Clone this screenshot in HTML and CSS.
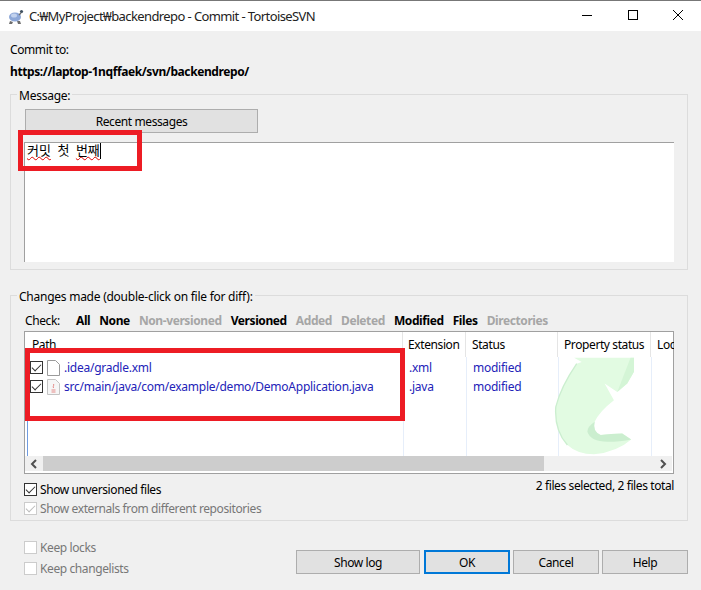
FILE: index.html
```html
<!DOCTYPE html>
<html lang="ko">

<head>
    <meta charset="UTF-8">
    <meta name="viewport" content="width=device-width, initial-scale=1.0">
    <title>Commit - TortoiseSVN</title>
    <link rel="stylesheet" href="styles.css">
</head>

<body>
    <div class="window">
        <div class="titlebar">
            <svg class="app-icon" width="17" height="17" viewBox="0 0 17 17">
                <path d="M3 13l-1 3h3l1-2zM10 13l1 3h3l-1-3z" fill="#6d6d6d" />
                <ellipse cx="8" cy="9" rx="6" ry="4.5" fill="#8ea8d8" />
                <ellipse cx="7" cy="7.5" rx="3" ry="2" fill="#c2d2ee" />
                <circle cx="14.5" cy="3.5" r="1.6" fill="#3f5060" />
                <path d="M12 7l2-2" stroke="#6d6d6d" stroke-width="1.5" />
            </svg>
            <span class="title-text">C:₩MyProject₩backendrepo - Commit - TortoiseSVN</span>
            <div class="win-buttons">
                <svg width="12" height="12" viewBox="0 0 12 12"><path d="M1 6.5h10" stroke="#000" /></svg>
                <svg width="12" height="12" viewBox="0 0 12 12"><rect x="1.5" y="1.5" width="9" height="9" fill="none" stroke="#000" /></svg>
                <svg width="12" height="12" viewBox="0 0 12 12"><path d="M1 1l10 10M11 1L1 11" stroke="#000" /></svg>
            </div>
        </div>

        <div class="content">
            <div class="commit-to">Commit to:</div>
            <div class="repo-url">https://laptop-1nqffaek/svn/backendrepo/</div>

            <fieldset class="group message-group">
                <legend>Message:</legend>
                <button class="btn recent">Recent messages</button>
                <div class="message-box"><span class="typo">커밋</span><span class="word">첫</span><span class="typo word">번째</span><span class="caret"></span></div>
            </fieldset>

            <fieldset class="group changes-group">
                <legend>Changes made (double-click on file for diff):</legend>
                <div class="filters">
                    <span class="check-label">Check:</span>
                    <b>All</b><b>None</b><b class="off">Non-versioned</b><b>Versioned</b><b class="off">Added</b><b class="off">Deleted</b><b>Modified</b><b>Files</b><b class="off">Directories</b>
                </div>

                <div class="file-list">
                    <div class="list-header">
                        <div class="col col-path">Path</div>
                        <div class="col col-ext">Extension</div>
                        <div class="col col-status">Status</div>
                        <div class="col col-prop">Property status</div>
                        <div class="col col-lock">Lock</div>
                    </div>
                    <div class="list-body">
                        <svg class="watermark" width="80" height="98" viewBox="460 110 240 295">
                            <path d="M520 112L543 125 528 130Q480 200 465 260 460 330 500 375 530 403 580 403 650 395 692 358L665 340Q630 340 600 345 575 335 582 305 595 275 640 240L612 190 650 215 680 190 725 112Z" fill="#e2fbe2" />
                            <path d="M582 305Q560 320 560 335 570 365 620 365 660 365 692 358L665 340Q630 340 600 345 575 335 582 305Z" fill="#cbeecf" />
                            <path d="M690 112L650 215 680 190 725 112Z" fill="#d4f5d6" />
                            <path d="M528 130Q480 200 465 260 460 330 500 375" fill="none" stroke="#cbeecf" stroke-width="4" />
                        </svg>
                        <div class="row">
                            <div class="col col-path">
                                <span class="tick"></span>
                                <svg class="file-icon" width="13" height="16" viewBox="0 0 13 16"><path d="M.5.5h8l4 4v11H.5z" fill="#fff" stroke="#9a9a9a" /></svg>
                                .idea/gradle.xml
                            </div>
                            <div class="col col-ext">.xml</div>
                            <div class="col col-status">modified</div>
                        </div>
                        <div class="row">
                            <div class="col col-path">
                                <span class="tick"></span>
                                <svg class="file-icon" width="13" height="16" viewBox="0 0 13 16"><path d="M.5.5h8l4 4v11H.5z" fill="#f6f6f6" stroke="#c4c4c4" /><path d="M6.5 5c1 1.500-1 2 0 4M4.500 11h4M4.500 13h4" fill="none" stroke="#e58a88" /></svg>
                                src/main/java/com/example/demo/DemoApplication.java
                            </div>
                            <div class="col col-ext">.java</div>
                            <div class="col col-status">modified</div>
                        </div>
                    </div>
                    <div class="hscroll">
                        <span class="arrow">
                            <svg width="8" height="10" viewBox="0 0 8 10"><path d="M6 1L2 5l4 4" fill="none" stroke="#505050" stroke-width="2" /></svg>
                        </span>
                        <div class="track"><div class="thumb"></div></div>
                        <span class="arrow">
                            <svg width="8" height="10" viewBox="0 0 8 10"><path d="M2 1l4 4-4 4" fill="none" stroke="#505050" stroke-width="2" /></svg>
                        </span>
                    </div>
                </div>

                <div class="options">
                    <div class="options-left">
                        <div class="check-row"><span class="tick"></span>Show unversioned files</div>
                        <div class="check-row disabled"><span class="tick"></span>Show externals from different repositories</div>
                    </div>
                    <div class="selected-count">2 files selected, 2 files total</div>
                </div>
            </fieldset>

            <div class="footer">
                <div class="keep">
                    <div class="check-row disabled"><span class="tick empty"></span>Keep locks</div>
                    <div class="check-row disabled"><span class="tick empty"></span>Keep changelists</div>
                </div>
                <div class="actions">
                    <button class="btn show-log">Show log</button>
                    <button class="btn small default">OK</button>
                    <button class="btn small">Cancel</button>
                    <button class="btn small">Help</button>
                </div>
            </div>
        </div>

        <div class="mark mark-message"></div>
        <div class="mark mark-files"></div>
    </div>
</body>

</html>
```

FILE: styles.css
```css
* {
    box-sizing: border-box;
}

html,
body {
    margin: 0;
    height: 100%;
}

body {
    font-family: "Noto Sans", "Noto Sans CJK KR", sans-serif;
    font-size: 12px;
    letter-spacing: -0.4px;
    color: #000;
    background-color: #f0f0f0;
    overflow: hidden;
}

.window {
    position: relative;
    height: 590px;
}

.titlebar {
    display: flex;
    align-items: center;
    height: 31px;
    padding-left: 7px;
    background: white;
    border-top: 1px solid #777;
}

.title-text {
    margin-left: 5px;
    font-size: 13px;
    letter-spacing: -0.6px;
    color: #222;
}

.win-buttons {
    display: flex;
    gap: 33.5px;
    margin-left: auto;
    margin-bottom: 2px;
    padding-right: 17px;
}

.content {
    padding: 11px 13px 0 10px;
}

.commit-to {
    height: 18px;
    line-height: 16px;
}

.repo-url {
    height: 19px;
    margin-top: 3px;
    line-height: 17px;
    font-weight: bold;
}

.group {
    margin: 0;
    padding: 0 13px 0 14px;
    border: 1px solid #dcdcdc;
    min-width: 0;
}

.group legend {
    padding: 4px 2px 0;
    margin-left: -8px;
    line-height: 16px;
    letter-spacing: -0.25px;
}

.message-group {
    height: 186px;
    margin-top: 2px;
}

.btn {
    display: block;
    font: inherit;
    letter-spacing: inherit;
    color: #000;
    background-color: #e1e1e1;
    border: 1px solid #adadad;
    height: 24px;
    padding: 0;
}

.recent {
    width: 233px;
    margin-top: 5px;
}

.message-box {
    display: flex;
    align-items: flex-start;
    height: 120px;
    margin: 9px 0 0 -1px;
    padding: 0 2px;
    font-size: 13px;
    letter-spacing: 0;
    line-height: 15px;
    background: white;
    border-top: 1px solid #a0a0a0;
    border-left: 1px solid #a0a0a0;
}

.word {
    margin-left: 6.5px;
}

.typo {
    text-decoration: underline wavy #e00000 1px;
}

.caret {
    width: 1px;
    height: 16px;
    background-color: #000;
}

.changes-group {
    height: 236px;
    margin-top: 15px;
}

.filters {
    display: flex;
    align-items: center;
    height: 18px;
    margin-top: 6px;
    gap: 9px;
}

.check-label {
    width: 42px;
}

.filters .off {
    color: #a6a6a6;
}

.file-list {
    display: flex;
    flex-direction: column;
    height: 143px;
    margin: 2px 0 0 -1px;
    background: white;
    border: 1px solid #a0a0a0;
}

.list-header {
    display: flex;
    height: 25px;
}

.col {
    flex: none;
    height: 100%;
    padding-left: 6px;
    border-right: 1px solid #e6eefa;
    overflow: hidden;
    white-space: nowrap;
}

.list-header .col {
    line-height: 26px;
    border-right-color: #e5e5e5;
}

.col-path {
    width: 378px;
    padding-left: 7px;
}

.col-ext {
    width: 63px;
    padding-left: 5px;
}

.col-status {
    width: 92px;
}

.col-prop {
    width: 93px;
}

.col-lock {
    width: 23px;
    border-right: none;
}

.list-body {
    position: relative;
    flex: 1;
    padding-top: 1px;
    border-left: 1px solid white;
    background-image: linear-gradient(#e6eefa, #e6eefa), linear-gradient(#e6eefa, #e6eefa), linear-gradient(#e6eefa, #e6eefa), linear-gradient(#e6eefa, #e6eefa), linear-gradient(#6f9be0, #6f9be0);
    background-size: 1px 100%;
    background-repeat: no-repeat;
    background-position: 377px 0, 440px 0, 532px 0, 625px 0, 1px 0;
}

.watermark {
    position: absolute;
    top: 0;
    left: 528px;
}

.row {
    position: relative;
    display: flex;
    height: 19px;
    letter-spacing: -0.25px;
    color: #2323b8;
}

.row .col {
    border-right: none;
    line-height: 19px;
}

.row .col-path {
    display: flex;
    align-items: center;
    padding-left: 4px;
}

.tick {
    position: relative;
    flex: none;
    display: inline-block;
    width: 13px;
    height: 13px;
    background: white;
    border: 1px solid #333;
}

.tick::after {
    content: "";
    position: absolute;
    left: 3px;
    top: 0;
    width: 4px;
    height: 8px;
    border: solid #333;
    border-width: 0 1.5px 1.5px 0;
    transform: rotate(45deg);
}

.tick.empty::after {
    display: none;
}

.file-icon {
    flex: none;
    margin: 0 4px 0 4px;
}

.hscroll {
    display: flex;
    height: 15px;
    margin-bottom: 2px;
    margin-right: 1px;
    background-color: #f0f0f0;
}

.arrow {
    display: flex;
    align-items: center;
    justify-content: center;
    width: 18px;
    flex: none;
}

.track {
    flex: 1;
}

.thumb {
    width: 501px;
    height: 100%;
    background-color: #cdcdcd;
}

.options {
    display: flex;
    justify-content: space-between;
    margin: 6px 0 0 -1px;
}

.check-row {
    display: flex;
    align-items: center;
    height: 19px;
    gap: 3px;
}

.disabled {
    color: #777;
}

.disabled .tick {
    border-color: #cccccc;
}

.disabled .tick::after {
    border-color: #bcbcbc;
}

.selected-count {
    margin-top: -3px;
}

.footer {
    display: flex;
    justify-content: space-between;
    margin-top: 15px;
    padding-left: 14px;
}

.keep {
    padding-top: 1px;
}

.keep .check-row {
    height: 21px;
}

.actions {
    display: flex;
    padding-top: 14px;
    gap: 3px;
}

.show-log {
    width: 124px;
    margin-right: 1px;
}

.small {
    width: 86px;
}

.default {
    border: 2px solid #0078d7;
}

.mark {
    position: absolute;
    border: 5px solid #ed1c24;
}

.mark-message {
    left: 18px;
    top: 130px;
    width: 124px;
    height: 41px;
}

.mark-files {
    left: 25px;
    top: 348px;
    width: 380px;
    height: 73px;
}
```
